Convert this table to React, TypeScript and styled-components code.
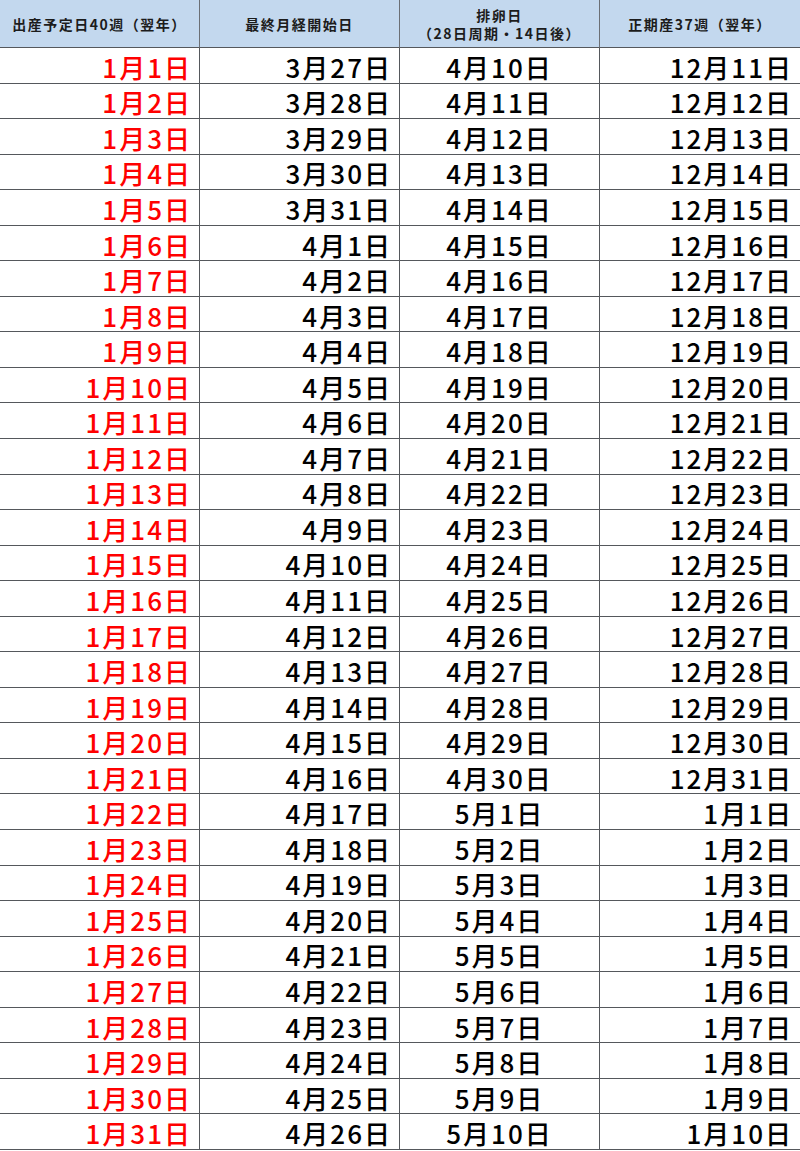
import React from 'react';
import styled, { createGlobalStyle } from 'styled-components';

const GlobalStyle = createGlobalStyle`
  html, body {
    margin: 0;
    padding: 0;
    background: #fff;
  }
  body {
    font-family: 'Noto Sans CJK JP', sans-serif;
  }
`;

const DAY = 24 * 60 * 60 * 1000;

const fmt = (t: number) => {
  const d = new Date(t);
  return `${d.getUTCMonth() + 1}月${d.getUTCDate()}日`;
};

const rows = Array.from({ length: 31 }, (_, i) => {
  const due = Date.UTC(2024, 0, i + 1);
  const lmp = due - 280 * DAY;
  return {
    due: fmt(due),
    lmp: fmt(lmp),
    ovulation: fmt(lmp + 14 * DAY),
    term: fmt(due - 21 * DAY),
  };
});

type Align = 'right' | 'center';

export default function App() {
  return (
    <>
      <GlobalStyle />
      <Sheet>
        <HeadCell>出産予定日40週（翌年）</HeadCell>
        <HeadCell>最終月経開始日</HeadCell>
        <HeadCell>
          排卵日
          <br />
          （28日周期・14日後）
        </HeadCell>
        <HeadCell $last>正期産37週（翌年）</HeadCell>
        {rows.map((r) => (
          <React.Fragment key={r.due}>
            <Cell $align="right" $red>
              {r.due}
            </Cell>
            <Cell $align="right">{r.lmp}</Cell>
            <Cell $align="center">{r.ovulation}</Cell>
            <Cell $align="right" $last>
              {r.term}
            </Cell>
          </React.Fragment>
        ))}
      </Sheet>
    </>
  );
}

const Sheet = styled.div`
  display: grid;
  grid-template-columns: repeat(4, 200px);
  grid-template-rows: 48px repeat(31, 35.55px);
  width: 800px;
`;

const HeadCell = styled.div<{ $last?: boolean }>`
  box-sizing: border-box;
  display: flex;
  align-items: center;
  justify-content: center;
  text-align: center;
  background: #c3d8ee;
  border-right: ${({ $last }) => ($last ? 'none' : '1px solid #6b6f75')};
  border-bottom: 1px solid #55585c;
  color: #1c1c1c;
  font-size: 14px;
  font-weight: 700;
  letter-spacing: 1.5px;
  line-height: 18px;
  padding-top: 1px;
`;

const Cell = styled.div<{ $align: Align; $red?: boolean; $last?: boolean }>`
  box-sizing: border-box;
  display: flex;
  align-items: center;
  justify-content: ${({ $align }) => ($align === 'center' ? 'center' : 'flex-end')};
  padding: 3px ${({ $align }) => ($align === 'center' ? '0' : '7px')} 0 0;
  border-right: ${({ $last }) => ($last ? 'none' : '1px solid #55585c')};
  border-bottom: 1px solid #55585c;
  color: ${({ $red }) => ($red ? '#ff0000' : '#000')};
  font-size: 26px;
  font-weight: 500;
  letter-spacing: 2px;
  line-height: 1;
  white-space: nowrap;
`;
